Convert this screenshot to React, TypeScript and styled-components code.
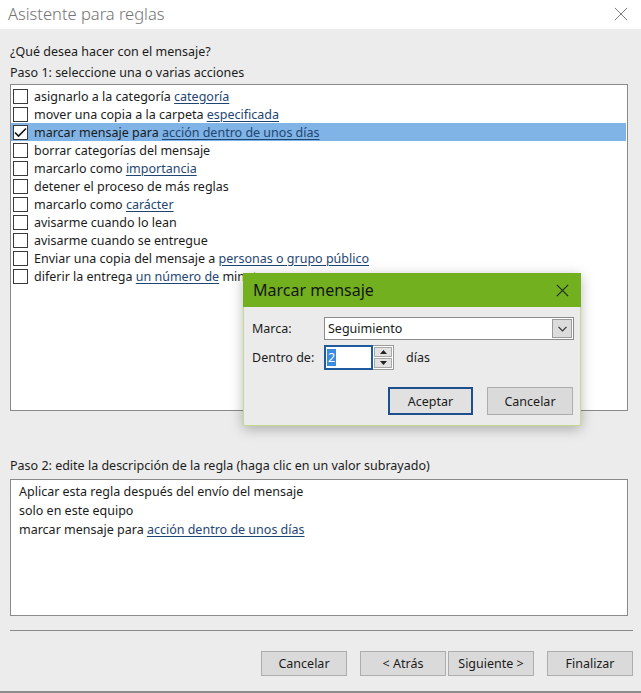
import React from "react";
import styled, { createGlobalStyle } from "styled-components";

const GlobalStyle = createGlobalStyle`
  html, body { margin: 0; padding: 0; background: #ececec; }
  body { font-family: "Noto Sans", "Open Sans", sans-serif; font-size: 12.5px; color: #1b1b1b; }
  * { box-sizing: border-box; }
`;

const Window = styled.div`
  position: relative;
  width: 641px;
  height: 693px;
  background: #ececec;
  display: flex;
  flex-direction: column;
  overflow: hidden;
`;

const TitleBar = styled.div`
  height: 29px;
  background: #ffffff;
  display: flex;
  align-items: center;
  justify-content: space-between;
  padding: 0 8px 2px 8px;
  flex: none;
`;

const Title = styled.div`
  font-size: 16.5px;
  color: #747474;
  font-weight: 300;
`;

const CloseBtn = styled.div`
  width: 16px;
  height: 16px;
  display: flex;
  align-items: center;
  justify-content: center;
  margin-right: 4px;
`;

const Body = styled.div`
  flex: 1;
  display: flex;
  flex-direction: column;
  padding: 0 8px 0 10px;
  border-bottom: 2px solid #8c8c8c;
`;

const Label = styled.div<{ $mt: number }>`
  margin-top: ${(p) => p.$mt}px;
  height: 18px;
  line-height: 18px;
  white-space: nowrap;
`;

const ListBox = styled.div`
  margin-top: 2px;
  width: 618px;
  height: 327px;
  background: #fff;
  border: 1px solid #8a8a8a;
  padding: 2px 0 0 0;
`;

const Row = styled.div<{ $selected?: boolean }>`
  height: 18px;
  display: flex;
  align-items: center;
  gap: 6px;
  padding-left: 2px;
  margin-right: 1px;
  background: ${(p) => (p.$selected ? "#80b3e6" : "transparent")};
  white-space: nowrap;
`;

const Box = styled.div`
  width: 15px;
  height: 15px;
  border: 1px solid #3a3a3a;
  background: #fff;
  flex: none;
  display: flex;
  align-items: center;
  justify-content: center;
`;

const Link = styled.span`
  color: #1f4672;
  text-decoration: underline;
  text-underline-offset: 2px;
`;

const DescBox = styled.div`
  margin-top: 4px;
  width: 618px;
  height: 137px;
  background: #fff;
  border: 1px solid #8a8a8a;
  padding: 2px 8px;
`;

const DescLine = styled.div`
  height: 19px;
  line-height: 19px;
  white-space: nowrap;
`;

const Separator = styled.div`
  margin-top: 14px;
  width: 623px;
  height: 1px;
  background: #8a8a8a;
`;

const ButtonRow = styled.div`
  margin-top: 20px;
  display: flex;
  justify-content: flex-end;
  padding-right: 0px;
`;

const Btn = styled.button<{ $ml?: number }>`
  width: 86px;
  height: 25px;
  margin-left: ${(p) => p.$ml ?? 0}px;
  background: #dadada;
  border: 1px solid #adadad;
  font-family: inherit;
  font-size: 12.5px;
  color: #1b1b1b;
  padding: 0;
`;

/* Popup */
const Popup = styled.div`
  position: absolute;
  left: 243px;
  top: 273px;
  width: 338px;
  height: 153px;
  background: #ebebeb;
  border: 1px solid #c4d98c;
  border-top: none;
  box-shadow: 0 3px 12px rgba(0, 0, 0, 0.28);
  display: flex;
  flex-direction: column;
`;

const PopupTitleBar = styled.div`
  height: 34px;
  background: #72b01f;
  margin: 0 -1px;
  display: flex;
  align-items: center;
  justify-content: space-between;
  padding: 0 12px 0 10px;
  flex: none;
`;

const PopupTitle = styled.div`
  font-size: 16px;
  color: #151515;
`;

const PopupBody = styled.div`
  padding: 10px 6px 0 8px;
  display: flex;
  flex-direction: column;
`;

const FieldRow = styled.div<{ $mt?: number }>`
  display: flex;
  align-items: center;
  margin-top: ${(p) => p.$mt ?? 0}px;
`;

const FieldLabel = styled.div`
  width: 72px;
  flex: none;
`;

const Select = styled.div`
  width: 250px;
  height: 23px;
  background: #fff;
  border: 1px solid #8a8a8a;
  display: flex;
  align-items: center;
  justify-content: space-between;
  padding: 0 1px 0 3px;
`;

const SelectArrow = styled.div`
  width: 20px;
  height: 19px;
  background: #dcdcdc;
  border: 1px solid #9a9a9a;
  display: flex;
  align-items: center;
  justify-content: center;
`;

const Spin = styled.div`
  display: flex;
  height: 25px;
`;

const SpinInput = styled.div`
  width: 49px;
  height: 25px;
  border: 2px solid #1f5a9c;
  background: #fff;
  display: flex;
  align-items: center;
  padding-left: 1px;
`;

const Sel = styled.span`
  background: #3b8ce0;
  color: #fff;
  padding: 0 1px;
  line-height: 17px;
`;

const SpinArrows = styled.div`
  width: 21px;
  height: 25px;
  border: 1px solid #9a9a9a;
  border-left: none;
  background: #fff;
  display: flex;
  flex-direction: column;
  gap: 1px;
  padding: 1px;
`;

const SpinHalf = styled.div`
  flex: 1;
  background: #e2e2e2;
  border: 1px solid #a8a8a8;
  display: flex;
  align-items: center;
  justify-content: center;
`;

const Unit = styled.div`
  margin-left: 12px;
`;

const PopupButtons = styled.div`
  display: flex;
  justify-content: flex-end;
  gap: 14px;
  margin-top: 17px;
  padding-right: 1px;
`;

const PopupBtn = styled.button<{ $primary?: boolean }>`
  width: ${(p) => (p.$primary ? 85 : 86)}px;
  height: 28px;
  background: ${(p) => (p.$primary ? "#e1e1e1" : "#dadada")};
  border: ${(p) => (p.$primary ? "2px solid #1c4f8c" : "1px solid #adadad")};
  font-family: inherit;
  font-size: 12.5px;
  color: #1b1b1b;
  padding: 0;
`;

const Check = () => (
  <svg width="13" height="11" viewBox="0 0 13 11">
    <path d="M1 5.5 L4.5 9 L12 1.5" fill="none" stroke="#111" strokeWidth="1.6" />
  </svg>
);

const XIcon = ({ size, color, w }: { size: number; color: string; w: number }) => (
  <svg width={size} height={size} viewBox="0 0 16 16">
    <path d="M1 1 L15 15 M15 1 L1 15" stroke={color} strokeWidth={w} fill="none" />
  </svg>
);

type Item = { text: string; link?: string; tail?: string; checked?: boolean };

const items: Item[] = [
  { text: "asignarlo a la categoría ", link: "categoría" },
  { text: "mover una copia a la carpeta ", link: "especificada" },
  { text: "marcar mensaje para ", link: "acción dentro de unos días", checked: true },
  { text: "borrar categorías del mensaje" },
  { text: "marcarlo como ", link: "importancia" },
  { text: "detener el proceso de más reglas" },
  { text: "marcarlo como ", link: "carácter" },
  { text: "avisarme cuando lo lean" },
  { text: "avisarme cuando se entregue" },
  { text: "Enviar una copia del mensaje a ", link: "personas o grupo público" },
  { text: "diferir la entrega ", link: "un número de", tail: " minutos" },
];

export default function App() {
  return (
    <>
      <GlobalStyle />
      <Window>
        <TitleBar>
          <Title>Asistente para reglas</Title>
          <CloseBtn>
            <XIcon size={14} color="#6a6a6a" w={1} />
          </CloseBtn>
        </TitleBar>
        <Body>
          <Label $mt={14}>¿Qué desea hacer con el mensaje?</Label>
          <Label $mt={3}>Paso 1: seleccione una o varias acciones</Label>
          <ListBox>
            {items.map((it, i) => (
              <Row key={i} $selected={it.checked}>
                <Box>{it.checked && <Check />}</Box>
                <span>
                  {it.text}
                  {it.link && <Link>{it.link}</Link>}
                  {it.tail}
                </span>
              </Row>
            ))}
          </ListBox>
          <Label $mt={46}>Paso 2: edite la descripción de la regla (haga clic en un valor subrayado)</Label>
          <DescBox>
            <DescLine>Aplicar esta regla después del envío del mensaje</DescLine>
            <DescLine>solo en este equipo</DescLine>
            <DescLine>
              marcar mensaje para <Link>acción dentro de unos días</Link>
            </DescLine>
          </DescBox>
          <Separator />
          <ButtonRow>
            <Btn>Cancelar</Btn>
            <Btn $ml={13}>&lt; Atrás</Btn>
            <Btn $ml={2}>Siguiente &gt;</Btn>
            <Btn $ml={13}>Finalizar</Btn>
          </ButtonRow>
        </Body>

        <Popup>
          <PopupTitleBar>
            <PopupTitle>Marcar mensaje</PopupTitle>
            <XIcon size={13} color="#1d2a10" w={1.4} />
          </PopupTitleBar>
          <PopupBody>
            <FieldRow>
              <FieldLabel>Marca:</FieldLabel>
              <Select>
                <span>Seguimiento</span>
                <SelectArrow>
                  <svg width="9" height="6" viewBox="0 0 9 6">
                    <path d="M0.5 0.8 L4.5 4.8 L8.5 0.8" fill="none" stroke="#333" strokeWidth="1.2" />
                  </svg>
                </SelectArrow>
              </Select>
            </FieldRow>
            <FieldRow $mt={5}>
              <FieldLabel>Dentro de:</FieldLabel>
              <Spin>
                <SpinInput>
                  <Sel>2</Sel>
                </SpinInput>
                <SpinArrows>
                  <SpinHalf>
                    <svg width="7" height="4" viewBox="0 0 7 4">
                      <path d="M0 4 L3.5 0 L7 4 Z" fill="#222" />
                    </svg>
                  </SpinHalf>
                  <SpinHalf>
                    <svg width="7" height="4" viewBox="0 0 7 4">
                      <path d="M0 0 L3.5 4 L7 0 Z" fill="#222" />
                    </svg>
                  </SpinHalf>
                </SpinArrows>
              </Spin>
              <Unit>días</Unit>
            </FieldRow>
            <PopupButtons>
              <PopupBtn $primary>Aceptar</PopupBtn>
              <PopupBtn>Cancelar</PopupBtn>
            </PopupButtons>
          </PopupBody>
        </Popup>
      </Window>
    </>
  );
}
